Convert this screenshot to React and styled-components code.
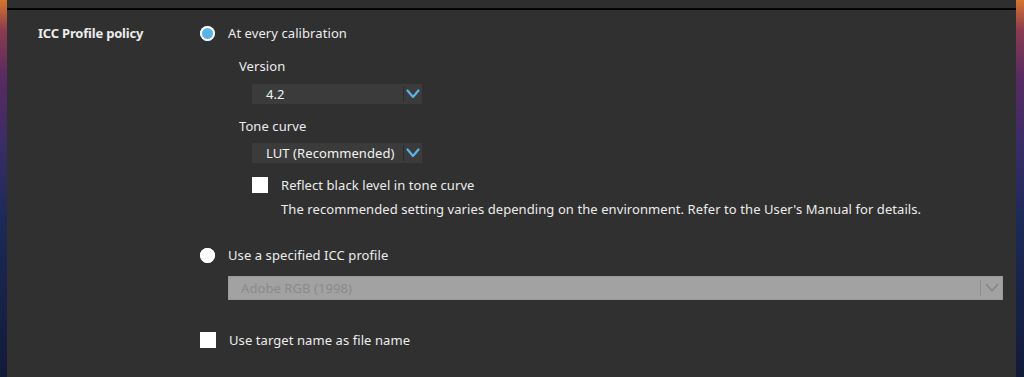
import React from "react";
import styled, { createGlobalStyle } from "styled-components";

const Global = createGlobalStyle`
  html, body { margin: 0; padding: 0; }
  body {
    width: 1024px;
    height: 377px;
    overflow: hidden;
    font-family: "Noto Sans", "Open Sans", sans-serif;
    background:
      linear-gradient(180deg, #d8742e 0%, #8a3c4e 8%, #5a2a62 20%, #3a2c66 38%, #1c2a58 58%, #121a38 100%);
  }
`;

const Screen = styled.div`
  display: flex;
  height: 377px;
  padding: 0 8px 0 7px;
  box-sizing: border-box;
`;

const Panel = styled.div`
  flex: 1;
  display: flex;
  flex-direction: column;
  background: #303030;
`;

const TopBand = styled.div`
  height: 8px;
  background: #2e2e2e;
  border-bottom: 2px solid #050505;
`;

const Body = styled.div`
  display: grid;
  grid-template-columns: 162px 1fr;
  padding: 13px 0 0 31px;
  color: #ececec;
  font-size: 13px;
  letter-spacing: 0.08px;
`;

const SectionLabel = styled.div`
  font-weight: 700;
  line-height: 20px;
  letter-spacing: -0.2px;
`;

const Options = styled.div`
  display: flex;
  flex-direction: column;
  padding-right: 13px;
`;

const OptionRow = styled.label`
  display: flex;
  align-items: center;
  gap: 13px;
  height: 20px;
  margin-top: ${(p) => p.$mt || 0}px;
  margin-left: ${(p) => p.$indent || 0}px;
  line-height: 20px;
`;

const Radio = styled.span`
  width: 15px;
  height: 15px;
  border-radius: 50%;
  background: ${(p) => (p.$checked ? "#5ab2e6" : "#ffffff")};
  box-shadow: inset 0 0 0 2px #ffffff;
  flex: none;
`;

const Checkbox = styled.span`
  width: 16px;
  height: 16px;
  background: #ffffff;
  flex: none;
`;

const SubLabel = styled.div`
  margin-top: ${(p) => p.$mt || 0}px;
  margin-left: 39px;
  line-height: 20px;
`;

const Note = styled.div`
  margin-top: ${(p) => p.$mt || 0}px;
  margin-left: 81px;
  line-height: 20px;
`;

const Select = styled.div`
  display: flex;
  align-items: center;
  width: 170px;
  height: 20px;
  margin-top: ${(p) => p.$mt || 0}px;
  margin-left: 52px;
  background: #3b3b3b;
  box-sizing: border-box;
`;

const SelectValue = styled.span`
  flex: 1;
  padding-left: 14px;
  color: #f2f2f2;
  white-space: nowrap;
`;

const Divider = styled.span`
  width: 1px;
  height: 16px;
  background: ${(p) => p.$color};
`;

const ChevronBox = styled.span`
  width: ${(p) => p.$w}px;
  display: flex;
  justify-content: center;
  align-items: center;
`;

const DisabledSelect = styled.div`
  display: flex;
  align-items: center;
  height: 24px;
  margin-top: ${(p) => p.$mt || 0}px;
  margin-left: 28px;
  background: #a2a2a2;
  box-shadow: inset 0 0 0 1px #9a9a9a;
`;

const DisabledValue = styled.span`
  flex: 1;
  padding-left: 13px;
  color: #8a8a8a;
`;

const Chevron = ({ color, w = 14, h = 8, sw = 2.2 }) => (
  <svg width={w} height={h + 2} viewBox={`0 0 ${w} ${h + 2}`}>
    <polyline
      points={`1.5,1.5 ${w / 2},${h} ${w - 1.5},1.5`}
      fill="none"
      stroke={color}
      strokeWidth={sw}
      strokeLinecap="round"
      strokeLinejoin="round"
    />
  </svg>
);

export default function App() {
  return (
    <>
      <Global />
      <Screen>
        <Panel>
          <TopBand />
          <Body>
            <SectionLabel>ICC Profile policy</SectionLabel>
            <Options>
              <OptionRow>
                <Radio $checked />
                At every calibration
              </OptionRow>
              <SubLabel $mt={13}>Version</SubLabel>
              <Select $mt={8}>
                <SelectValue>4.2</SelectValue>
                <Divider $color="#2c2c2c" />
                <ChevronBox $w={18}>
                  <Chevron color="#5ab2e6" />
                </ChevronBox>
              </Select>
              <SubLabel $mt={12}>Tone curve</SubLabel>
              <Select $mt={7}>
                <SelectValue>LUT (Recommended)</SelectValue>
                <Divider $color="#2c2c2c" />
                <ChevronBox $w={18}>
                  <Chevron color="#5ab2e6" />
                </ChevronBox>
              </Select>
              <OptionRow $mt={12} $indent={52}>
                <Checkbox />
                Reflect black level in tone curve
              </OptionRow>
              <Note $mt={4}>
                The recommended setting varies depending on the environment. Refer to the User's Manual for details.
              </Note>
              <OptionRow $mt={26}>
                <Radio />
                Use a specified ICC profile
              </OptionRow>
              <DisabledSelect $mt={11}>
                <DisabledValue>Adobe RGB (1998)</DisabledValue>
                <Divider $color="#8c8c8c" />
                <ChevronBox $w={22}>
                  <Chevron color="#858585" sw={1.6} />
                </ChevronBox>
              </DisabledSelect>
              <OptionRow $mt={30}>
                <Checkbox />
                Use target name as file name
              </OptionRow>
            </Options>
          </Body>
        </Panel>
      </Screen>
    </>
  );
}
